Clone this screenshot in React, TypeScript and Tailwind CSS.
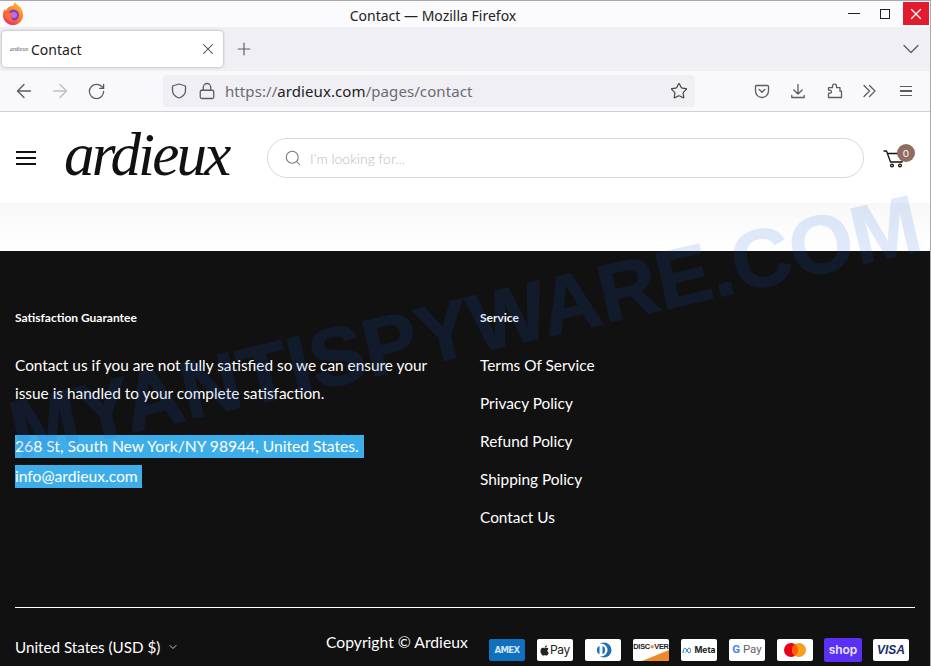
import React from "react";
import { ArrowLeft, ArrowRight, RotateCw, Lock, Star, X, Plus, ChevronDown, Search } from "lucide-react";

const jost = "font-['Lato','Noto_Sans',sans-serif]";

function FirefoxLogo() {
  return (
    <svg width="24" height="24" viewBox="0 0 24 24" className="absolute left-[1px] top-[1px]">
      <defs>
        <linearGradient id="ff" x1="0.8" y1="0" x2="0.2" y2="1">
          <stop offset="0" stopColor="#ffbd2e" />
          <stop offset="0.5" stopColor="#ff7a2e" />
          <stop offset="1" stopColor="#f0246e" />
        </linearGradient>
      </defs>
      <path d="M12 23a10 10 0 0 1-10-10.500c0-2.500 1-4.500 2-5.500 0 1 .5 1.500 1 2 .8-2.500 3-5 6-5 4-.4 0-2 3-3.500 1 2 3.500 2.500 5 4.500 1.500 2 3 4.500 3 7.500a10 10 0 0 1-10 10.500z" fill="url(#ff)" />
      <circle cx="12.500" cy="13" r="5.500" fill="#7b3fc4" />
      <circle cx="13" cy="13" r="3" fill="#c86dd7" />
      <path d="M3 11c2-2 5 1 8-1 0 0-3 6 2 9-5 1.500-10-3-10-8z" fill="#ff6a3a" />
    </svg>
  );
}

function PocketIcon() {
  return (
    <svg width="16" height="16" viewBox="0 0 16 16" fill="none" stroke="#5b5b66" strokeWidth="1.3" strokeLinecap="round" strokeLinejoin="round">
      <path d="M2.500 2.500h11a1 1 0 0 1 1 1v4.500a6.500 6.500 0 0 1-13 0V3.500a1 1 0 0 1 1-1z" />
      <path d="M5.200 6.500 8 9.200l2.800-2.700" />
    </svg>
  );
}

function DownloadIcon() {
  return (
    <svg width="16" height="16" viewBox="0 0 16 16" fill="none" stroke="#5b5b66" strokeWidth="1.3" strokeLinecap="round" strokeLinejoin="round">
      <path d="M8 1.500v9.500M3.800 7 8 11l4.200-4" />
      <path d="M1.800 12.500v2h12.400v-2" />
    </svg>
  );
}

function PuzzleIcon() {
  return (
    <svg width="16" height="16" viewBox="0 0 16 16" fill="none" stroke="#5b5b66" strokeWidth="1.3" strokeLinejoin="round">
      <path d="M1.500 14.800V10.500h1.500a1.500 1.500 0 0 0 0-3H1.500V5h4V3.500a2 2 0 0 1 4 0V5h3.500v3.500H14.500v6.300z" transform="translate(0 -.3)" />
    </svg>
  );
}

function ChevronsIcon() {
  return (
    <svg width="16" height="16" viewBox="0 0 16 16" fill="none" stroke="#5b5b66" strokeWidth="1.3" strokeLinecap="round" strokeLinejoin="round">
      <path d="M2 2.500 7.500 8 2 13.500M7.500 2.500 13 8l-5.500 5.500" />
    </svg>
  );
}

function HamburgerIcon() {
  return (
    <div className="flex w-[12px] flex-col gap-[3px]">
      <div className="h-[1.500px] bg-[#5b5b66]" />
      <div className="h-[1.500px] bg-[#5b5b66]" />
      <div className="h-[1.500px] bg-[#5b5b66]" />
    </div>
  );
}

function ShieldIcon() {
  return (
    <svg width="16" height="16" viewBox="0 0 16 16" fill="none" stroke="#5b5b66" strokeWidth="1.3" strokeLinejoin="round">
      <path d="M8 1 14.500 3v4.500c0 3.800-3 6.300-6.500 7.500-3.500-1.200-6.500-3.700-6.500-7.500V3z" />
    </svg>
  );
}

function CartIcon() {
  return (
    <svg width="22" height="20" viewBox="0 0 22 20" fill="none" stroke="#111" strokeWidth="1.300" strokeLinecap="round" strokeLinejoin="round">
      <path d="M1 2h2.500l4 11h11.500l1.500-8.500H5" />
      <circle cx="9" cy="16.500" r="1.400" />
      <circle cx="17" cy="16.500" r="1.400" />
    </svg>
  );
}

function AppleGlyph() {
  return (
    <svg width="9" height="11" viewBox="0 0 14 17" fill="#222">
      <path d="M11.600 9c0-2 1.600-3 1.700-3-1-1.400-2.400-1.600-2.900-1.600-1.200-.1-2.400.7-3 .7s-1.600-.7-2.600-.7C3.400 4.400 2.100 5.200 1.400 6.400 0 8.800 1 12.400 2.400 14.400c.7 1 1.500 2 2.500 2 1 0 1.400-.6 2.600-.6s1.500.6 2.600.6 1.800-1 2.400-2c.8-1.100 1.100-2.200 1.100-2.300-.1 0-2-.8-2-3.100zM9.700 3.100C10.300 2.400 10.700 1.400 10.600.4c-.8 0-1.900.6-2.500 1.300-.5.6-1 1.600-.9 2.500.9.100 1.900-.4 2.500-1.100z" />
    </svg>
  );
}

function Pay({ children, className = "bg-white" }: { children?: React.ReactNode; className?: string }) {
  return <div className={`relative flex h-[22px] w-[36px] items-center justify-center overflow-hidden rounded-[2px] ${className}`}>{children}</div>;
}

function PaymentIcons() {
  return (
    <div className="flex items-center gap-[12px]">
      <Pay className="bg-[#1170bd]">
        <span className="font-['DejaVu_Sans',sans-serif] text-[8.500px] leading-none font-bold tracking-[-0.6px] text-[#cfe6f7]">AMEX</span>
      </Pay>
      <Pay>
        <span className="flex items-center gap-[1px] font-['Inter',sans-serif] text-[12px] leading-none font-normal tracking-[-0.3px] text-[#222]"><AppleGlyph />Pay</span>
      </Pay>
      <Pay>
        <svg width="20" height="16" viewBox="0 0 20 16">
          <circle cx="11" cy="8" r="7.500" fill="#1f6fb2" />
          <circle cx="8" cy="8" r="6.500" fill="#fff" />
          <path d="M6.500 3.800a4.600 4.600 0 0 0 0 8.400zM9.500 3.800a4.600 4.600 0 0 1 0 8.400z" fill="#1f6fb2" />
        </svg>
      </Pay>
      <Pay>
        <div className="absolute bottom-0 right-0 h-[11px] w-[27px] bg-[#ee8a2a] [clip-path:polygon(100%_0,100%_100%,0_100%)]" />
        <span className="relative mt-[-7px] font-['Liberation_Sans',sans-serif] text-[7.500px] leading-none font-bold tracking-[-0.3px] text-[#222]">DISC<span className="text-[#ee8a2a]">●</span>VER</span>
      </Pay>
      <Pay>
        <span className="flex items-center gap-[1px] font-['Inter',sans-serif] text-[8.500px] leading-none font-bold text-[#222]">
          <svg width="11" height="7" viewBox="0 0 11 7" fill="none" stroke="#1877d2" strokeWidth="1">
            <path d="M1 6c0-3 1-5 2-5s3 5 4 5 1.500-1 1.500-2.500S8 1 7 1 4.500 5 3.500 5.500" />
          </svg>
          Meta
        </span>
      </Pay>
      <Pay>
        <span className="font-['Roboto',sans-serif] text-[11.500px] leading-none text-[#5f6368]">
          <span className="font-bold text-[#4285f4]">G</span> Pay
        </span>
      </Pay>
      <Pay>
        <svg width="24" height="16" viewBox="0 0 24 16">
          <circle cx="8" cy="8" r="7" fill="#eb001b" />
          <circle cx="16" cy="8" r="7" fill="#f79e1b" />
          <path d="M12 2.200a7 7 0 0 1 0 11.600 7 7 0 0 1 0-11.600z" fill="#ff5f00" />
        </svg>
      </Pay>
      <div className="ml-[-1px] mr-[-1px] flex h-[24px] w-[38px] items-center justify-center rounded-[2px] bg-[#5a31f4]">
        <span className="font-['Inter',sans-serif] text-[12px] leading-none font-semibold text-[#e8e4fb]">shop</span>
      </div>
      <Pay>
        <span className="font-['Liberation_Sans',sans-serif] text-[12px] leading-none font-bold italic text-[#1a2e6e]">VISA</span>
      </Pay>
    </div>
  );
}

export default function App() {
  return (
    <div className="relative h-[666px] w-[931px] overflow-hidden bg-white font-['Noto_Sans',sans-serif]">
      {/* title bar */}
      <div className="relative flex h-[27px] items-center justify-center border-t border-[#aaaaaa] bg-[#fbfbfd] pr-[65px] text-[14px] text-[#222]">
        <FirefoxLogo />
        <span className="mt-[2px]">Contact — Mozilla Firefox</span>
        <div className="absolute right-[2px] top-[1px] flex h-[23px] items-center">
          <div className="mr-[20px] h-[1px] w-[12px] bg-[#222]" />
          <div className="mr-[13px] h-[10px] w-[10px] border border-[#222]" />
          <div className="flex h-[23px] w-[26px] items-center justify-center bg-[#e31b2e]">
            <X size={18} color="#fff" strokeWidth={1.600} />
          </div>
        </div>
      </div>

      {/* tab strip */}
      <div className="flex h-[44px] items-center bg-[#f0f0f4] pl-[2px] pr-[13px]">
        <div className="flex h-[36px] w-[221px] items-center rounded-[4px] bg-white pl-[8px] pr-[6px] shadow-[0_0_3px_rgba(0,0,0,0.35)]">
          <span className="w-[16px] text-center font-['Liberation_Serif',serif] text-[6px] italic text-[#555]">ardieux</span>
          <span className="ml-[5px] flex-1 text-[14px] text-[#222]">Contact</span>
          <X size={18} color="#444" strokeWidth={1.400} />
        </div>
        <Plus size={20} color="#5b5b66" strokeWidth={1.400} className="ml-[11px]" />
        <div className="flex-1" />
        <ChevronDown size={28} color="#5b5b66" strokeWidth={1.100} className="mr-[-7px]" />
      </div>

      {/* nav bar */}
      <div className="flex h-[41px] items-center border-b border-[#cfcfd8] bg-[#f9f9fb]">
        <ArrowLeft size={22} color="#5b5b66" strokeWidth={1.500} className="ml-[13px]" />
        <ArrowRight size={22} color="#bdbdc4" strokeWidth={1.500} className="ml-[14px]" />
        <RotateCw size={19} color="#5b5b66" strokeWidth={1.600} className="ml-[16px]" />
        <div className="ml-[57px] flex h-[32px] w-[532px] items-center rounded-[4px] bg-[#f0f0f4] pl-[8px] pr-[7px]">
          <ShieldIcon />
          <Lock size={18} color="#5b5b66" strokeWidth={1.700} className="ml-[11px]" />
          <span className="ml-[9px] flex-1 text-[15px] tracking-[0.08px] text-[#6b6b73]">
            https://<span className="text-[#222]">ardieux.com</span>/pages/contact
          </span>
          <Star size={18} color="#444" strokeWidth={1.600} />
        </div>
        <div className="ml-[59px]"><PocketIcon /></div>
        <div className="ml-[20px]"><DownloadIcon /></div>
        <div className="ml-[21px]"><PuzzleIcon /></div>
        <div className="ml-[19px]"><ChevronsIcon /></div>
        <div className="ml-[22px]"><HamburgerIcon /></div>
      </div>

      {/* site header */}
      <div className="h-[139px] bg-[linear-gradient(to_bottom,#ffffff_0,#ffffff_91px,#f8f8f8_91px,#ffffff_139px)]">
        <div className="flex items-start px-[16px] pt-[26px]">
          <div className="mt-[13px]">
            <div className="flex w-[20px] flex-col gap-[4px]">
              <div className="h-[2px] bg-[#111]" />
              <div className="h-[2px] bg-[#111]" />
              <div className="h-[2px] bg-[#111]" />
            </div>
          </div>
          <div className="ml-[28px] mt-[-21px] w-[170px] font-['Liberation_Serif',serif] text-[61px] leading-[76px] tracking-[-2.800px] text-[#111] italic">ardieux</div>
          <div className="ml-[33px] flex h-[40px] w-[597px] items-center rounded-full border border-[#d9d9d9] bg-white pl-[16px]">
            <Search size={18} color="#777" strokeWidth={1.400} />
            <span className={`ml-[8px] ${jost} text-[14px] font-light text-[#bbbbbb]`}>I'm looking for...</span>
          </div>
          <div className="relative ml-[19px] mt-[11px]">
            <CartIcon />
            <div className="absolute left-[14px] top-[-5px] flex h-[18px] w-[18px] items-center justify-center rounded-full bg-[#8f6d60] font-['Lato',sans-serif] text-[10px] text-white">0</div>
          </div>
        </div>
      </div>

      {/* footer */}
      <footer className={`flex h-[415px] flex-col bg-[#111111] px-[15px] pt-[58px] text-white ${jost}`}>
        <div className="flex h-[298px]">
          <div className="w-[465px]">
            <h4 className="h-[17px] text-[12px] leading-[17px] font-bold">Satisfaction Guarantee</h4>
            <p className="mt-[25px] w-[425px] text-[15.400px] leading-[28px]">
              Contact us if you are not fully satisfied so we can ensure your issue is handled to your complete satisfaction.
            </p>
            <div className="mt-[28px] flex flex-col items-start gap-[7px] text-[15.650px] leading-[22px]">
              <div className="h-[23px] w-[349px] bg-[#3daee9] whitespace-nowrap">268 St, South New York/NY 98944, United States.</div>
              <div className="h-[23px] w-[127px] bg-[#3daee9] whitespace-nowrap">info@ardieux.com</div>
            </div>
          </div>
          <div>
            <h4 className="h-[17px] text-[12px] leading-[17px] font-bold">Service</h4>
            <ul className="mt-[25px] flex flex-col gap-[10px] text-[15.400px] leading-[28px]">
              <li>Terms Of Service</li>
              <li>Privacy Policy</li>
              <li>Refund Policy</li>
              <li>Shipping Policy</li>
              <li>Contact Us</li>
            </ul>
          </div>
        </div>
        <div className="h-[1px] w-[900px] bg-white" />
        <div className="flex items-start">
          <div className="mt-[27px] flex w-[311px] items-center gap-[7px] text-[15.200px] leading-[24px]">
            United States (USD $)
            <ChevronDown size={12} strokeWidth={1.800} color="#ddd" />
          </div>
          <div className="mt-[22px] w-[163px] text-[15.700px] leading-[24px] whitespace-nowrap">Copyright © Ardieux</div>
          <div className="mt-[30px]"><PaymentIcons /></div>
        </div>
      </footer>

      {/* watermark over the whole screenshot */}
      <div className="pointer-events-none absolute left-[-15px] top-[286px] w-[960px] origin-center -rotate-[13deg] text-center font-['Liberation_Sans',sans-serif] text-[82px] leading-none font-bold whitespace-nowrap text-[#1a62e0] opacity-[0.13] [-webkit-text-stroke:1px_#1a62e0]">
        MYANTISPYWARE.COM
      </div>

      {/* window edge */}
      <div className="absolute right-0 top-0 h-full w-[1px] bg-[#aaaaaa]" />
    </div>
  );
}
